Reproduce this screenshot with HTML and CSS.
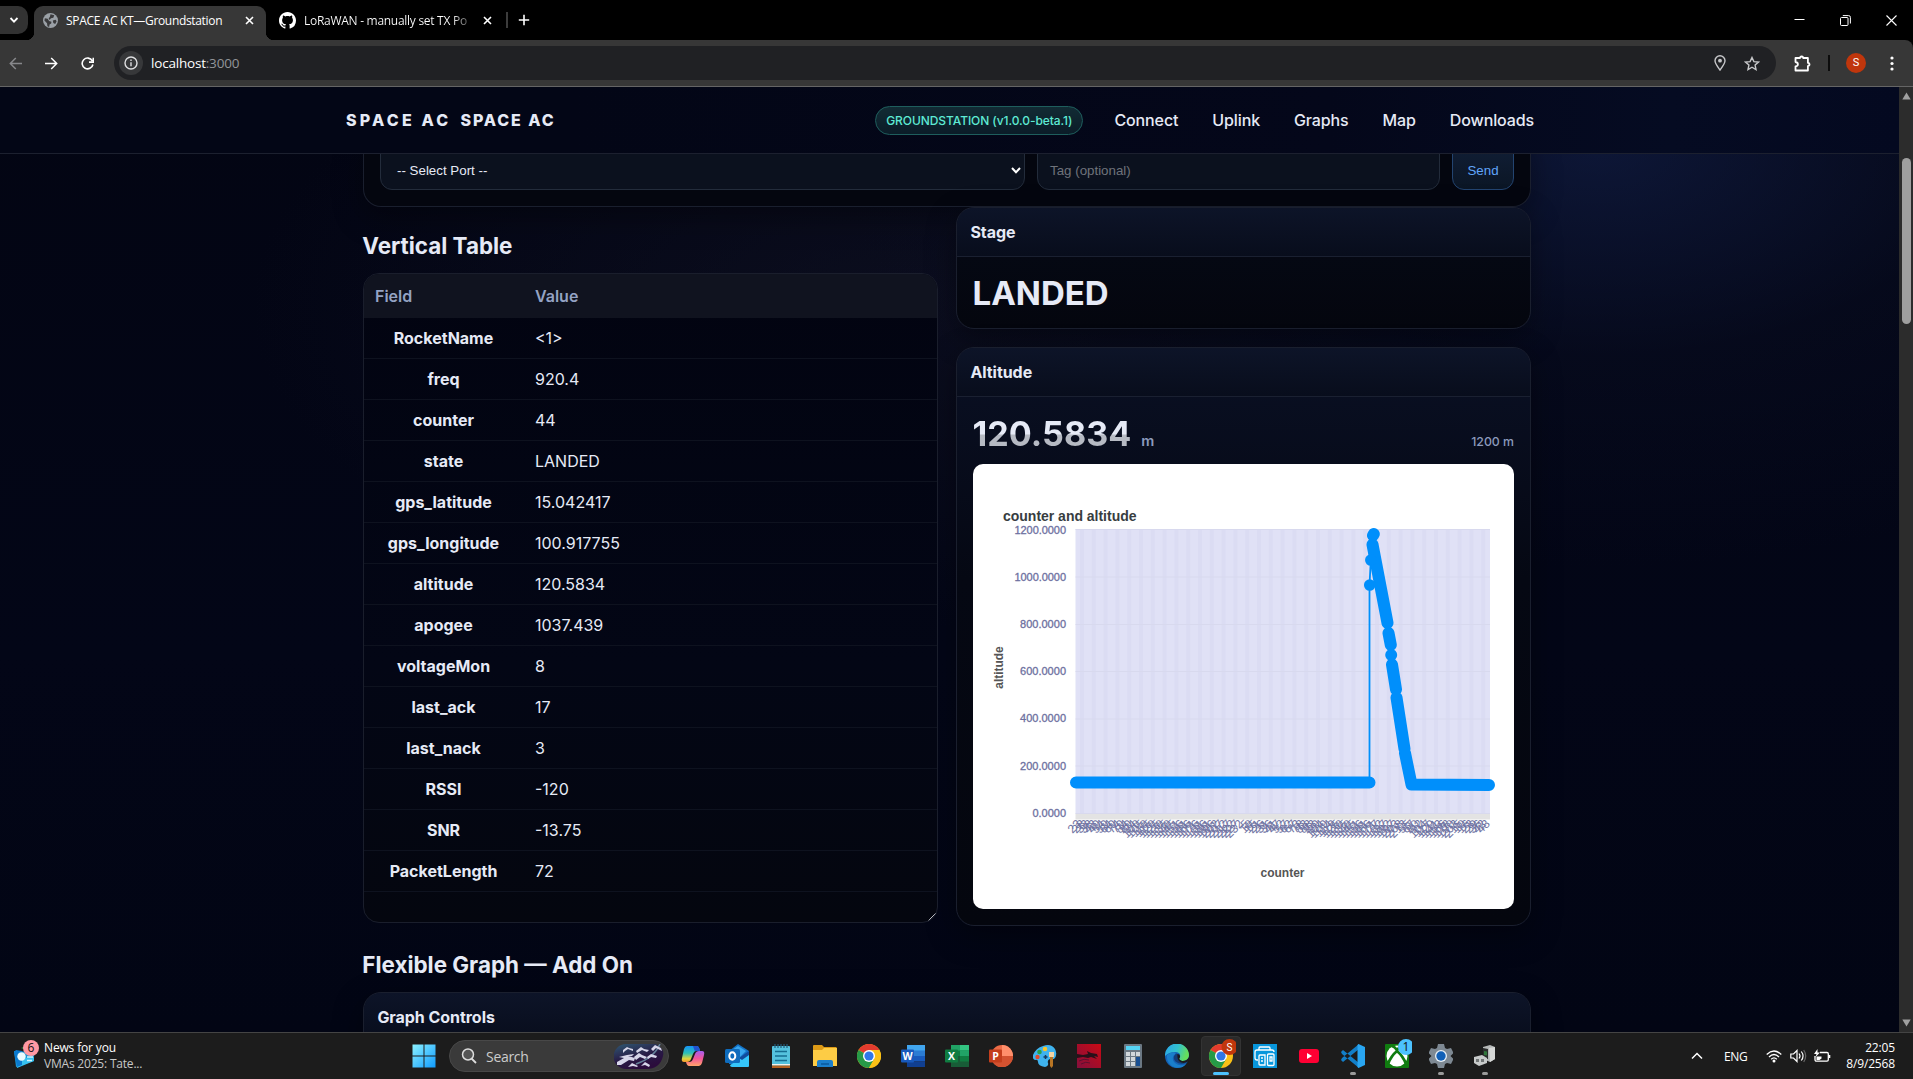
FILE: index.html
```html
<!DOCTYPE html>
<html lang="en">
<head>
<meta charset="utf-8">
<title>SPACE AC KT—Groundstation</title>
<link rel="stylesheet" href="styles.css">
</head>
<body>
<div class="screen">
  <div class="tabstrip">
    <div class="tab-search"><svg width="10" height="10" viewBox="0 0 10 10"><path d="M1.5 3l3.5 3.6L8.5 3" fill="none" stroke="#fff" stroke-width="1.8"/></svg></div>
    <div class="tab tab-active">
      <svg class="favicon" width="15" height="15" viewBox="0 0 16 16"><circle cx="8" cy="8" r="8" fill="#9aa0a6"/><path d="M2 5.5l3 .5 1.500 2.500 2.500.8-.3 2-1.700 1-.5 2.500-1.800-.8-.4-3L1.500 8zM8 1.200l4 1.300-1 2.500-2.500.5-1.500 2-1-1.800 1.300-1.500zM10.500 8l3-.8 1 1.500-1.500 3-2-1z" fill="#3a3a3c"/></svg>
      <span class="tab-title t1">SPACE AC KT—Groundstation</span>
      <svg class="tab-close" width="9" height="9" viewBox="0 0 9 9"><path d="M1 1l7 7M8 1l-7 7" stroke="#fff" stroke-width="1.600"/></svg>
    </div>
    <div class="tab tab-idle">
      <svg class="favicon" width="17" height="17" viewBox="0 0 16 16"><path fill="#fff" d="M8 0C3.580 0 0 3.580 0 8c0 3.540 2.290 6.530 5.470 7.590.4.070.55-.17.55-.38 0-.19-.01-.82-.01-1.490-2.010.37-2.530-.49-2.690-.94-.09-.23-.48-.94-.82-1.130-.28-.15-.68-.52-.01-.53.63-.01 1.080.58 1.230.82.72 1.210 1.870.87 2.330.66.07-.52.28-.87.51-1.070-1.780-.2-3.640-.89-3.640-3.950 0-.87.31-1.590.82-2.150-.08-.2-.36-1.020.08-2.120 0 0 .67-.21 2.200.82.640-.18 1.320-.27 2-.27s1.360.09 2 .27c1.530-1.040 2.200-.82 2.200-.82.440 1.100.16 1.920.08 2.120.51.56.82 1.270.82 2.150 0 3.070-1.870 3.750-3.650 3.950.29.25.54.73.54 1.480 0 1.070-.01 1.930-.01 2.200 0 .21.15.46.55.38A8.010 8.010 0 0016 8c0-4.420-3.580-8-8-8z"/></svg>
      <span class="tab-title t2">LoRaWAN - manually set TX Po</span>
      <svg class="tab-close" width="9" height="9" viewBox="0 0 9 9"><path d="M1 1l7 7M8 1l-7 7" stroke="#fff" stroke-width="1.600"/></svg>
    </div>
    <span class="tab-divider"></span>
    <svg class="new-tab" width="12" height="12" viewBox="0 0 12 12"><path d="M6 .8v10.400M.8 6h10.400" stroke="#fff" stroke-width="1.600"/></svg>
    <div class="window-buttons">
      <svg width="11" height="11" viewBox="0 0 11 11"><path d="M.5 4.500h10" stroke="#fff"/></svg>
      <svg width="11" height="11" viewBox="0 0 11 11"><rect x=".5" y="2.500" width="7.500" height="8" rx="1" fill="none" stroke="#fff"/><path d="M2.800.6H8.500a1.800 1.800 0 011.900 1.800V8.500" fill="none" stroke="#fff"/></svg>
      <svg width="11" height="11" viewBox="0 0 11 11"><path d="M.5.5l10 10M10.500.5l-10 10" stroke="#fff" stroke-width="1.100"/></svg>
    </div>
  </div>

  <div class="toolbar">
    <div class="nav-buttons">
      <svg width="13" height="13" viewBox="0 0 13 13"><path d="M13 6.500H1.300M6.800 1L1.300 6.500l5.500 5.500" fill="none" stroke="#87888b" stroke-width="1.500"/></svg>
      <svg width="13" height="13" viewBox="0 0 13 13"><path d="M0 6.500h11.700M6.200 1l5.500 5.500-5.500 5.500" fill="none" stroke="#fff" stroke-width="1.500"/></svg>
      <svg width="13" height="13" viewBox="0 0 13 13"><path d="M11.300 3.800A5.400 5.400 0 1011.900 7.500M12.300.8v4.300H8" fill="none" stroke="#fff" stroke-width="1.600"/></svg>
    </div>
    <div class="omnibox">
      <span class="site-info"><svg width="14" height="14" viewBox="0 0 14 14"><circle cx="7" cy="7" r="6" fill="none" stroke="#dedfe1" stroke-width="1.400"/><path d="M7 6.200v4M7 3.500v1.500" stroke="#dedfe1" stroke-width="1.400"/></svg></span>
      <span class="url">localhost<span class="port">:3000</span></span>
      <svg class="pin" width="12" height="16" viewBox="0 0 12 16"><path d="M6 15C3 11 1 8.500 1 5.800a5 5 0 0110 0C11 8.500 9 11 6 15z" fill="none" stroke="#c7c8ca" stroke-width="1.400"/><circle cx="6" cy="5.700" r="1.900" fill="#c7c8ca"/></svg>
      <svg class="star" width="16" height="15" viewBox="0 0 16 15"><path d="M8 1.500l1.900 4.100 4.600.5-3.400 3 .9 4.400L8 11.200l-4 2.300.9-4.400-3.400-3 4.600-.5z" fill="none" stroke="#c7c8ca" stroke-width="1.400"/></svg>
    </div>
    <svg class="puzzle" width="17" height="17" viewBox="0 0 17 17"><path d="M1.500 3H6V2.300q1.700-1.600 3.200 0V3h4.700v4.800l1 .4q1.200 1.200 0 2.400l-1 .4v4.500H1.500v-4q2.400-.3 2.400-2.200T1.500 7z" fill="none" stroke="#fff" stroke-width="1.800" stroke-linejoin="round"/></svg>
    <span class="bar-divider"></span>
    <span class="avatar">S</span>
    <svg class="menu" width="4" height="15" viewBox="0 0 4 15"><g fill="#fff"><circle cx="2" cy="2" r="1.600"/><circle cx="2" cy="7.500" r="1.600"/><circle cx="2" cy="13" r="1.600"/></g></svg>
  </div>

  <div class="viewport">
    <div class="page">
      <header class="site-header">
        <div class="brand"><span class="brand-wide">SPACE AC</span><span class="brand-name">SPACE AC</span></div>
        <nav class="site-nav">
          <span class="pill">GROUNDSTATION (v1.0.0-beta.1)</span>
          <a>Connect</a><a>Uplink</a><a>Graphs</a><a>Map</a><a>Downloads</a>
        </nav>
      </header>
      <main class="content">
        <section class="card port-card">
          <div class="field select"><span>-- Select Port --</span><svg width="10" height="7" viewBox="0 0 10 7"><path d="M1 1l4 4.200L9 1" fill="none" stroke="#fff" stroke-width="2"/></svg></div>
          <div class="field tag">Tag (optional)</div>
          <div class="send">Send</div>
        </section>
        <div class="columns">
          <section class="left">
            <h2>Vertical Table</h2>
            <div class="table-wrap">
              <table>
                <thead><tr><th>Field</th><th>Value</th></tr></thead>
                <tbody>
                  <tr><th>RocketName</th><td>&lt;1&gt;</td></tr>
                  <tr><th>freq</th><td>920.4</td></tr>
                  <tr><th>counter</th><td>44</td></tr>
                  <tr><th>state</th><td>LANDED</td></tr>
                  <tr><th>gps_latitude</th><td>15.042417</td></tr>
                  <tr><th>gps_longitude</th><td>100.917755</td></tr>
                  <tr><th>altitude</th><td>120.5834</td></tr>
                  <tr><th>apogee</th><td>1037.439</td></tr>
                  <tr><th>voltageMon</th><td>8</td></tr>
                  <tr><th>last_ack</th><td>17</td></tr>
                  <tr><th>last_nack</th><td>3</td></tr>
                  <tr><th>RSSI</th><td>-120</td></tr>
                  <tr><th>SNR</th><td>-13.75</td></tr>
                  <tr><th>PacketLength</th><td>72</td></tr>
                </tbody>
              </table>
              <svg class="grip" width="8" height="8" viewBox="0 0 8 8"><path d="M0 8L8 0M5 8l3-3" stroke="#b9bbc2" stroke-width="1"/></svg>
            </div>
          </section>
          <section class="right">
            <div class="card stage">
              <h3>Stage</h3>
              <div class="big">LANDED</div>
            </div>
            <div class="card altitude">
              <h3>Altitude</h3>
              <div class="reading"><span class="big shaded">120.5834</span><span class="unit">m</span><span class="max">1200 m</span></div>
              <div class="chart-box">
                <svg width="541" height="445" viewBox="973 464 541 445" class="chart">
                  <text class="c-title" x="1003" y="521" textLength="133.500">counter and altitude</text>
                  <rect x="1075.500" y="529" width="414.500" height="284.500" fill="#e0e1f6"/>
                  <rect x="1075.500" y="813.500" width="414.500" height="6" fill="#e3e3e3"/>
                  <g id="bands"></g>
                  <path d="M1075.500 529.500h414.500M1075.500 577h414.500M1075.500 624.500h414.500M1075.500 671.500h414.500M1075.500 719h414.500M1075.500 766h414.500M1075.500 813.500h414.500" stroke="#d8d9ee"/>
                  <g class="y-labels">
                    <text x="1066" y="534" textLength="51.500">1200.0000</text>
                    <text x="1066" y="581" textLength="51.500">1000.0000</text>
                    <text x="1066" y="628" textLength="46">800.0000</text>
                    <text x="1066" y="675" textLength="46">600.0000</text>
                    <text x="1066" y="722" textLength="46">400.0000</text>
                    <text x="1066" y="770" textLength="46">200.0000</text>
                    <text x="1066" y="817" textLength="33.500">0.0000</text>
                  </g>
                  <text class="c-axis" transform="translate(1003 667.500) rotate(-90)" textLength="42.500">altitude</text>
                  <text class="c-axis" x="1282.500" y="877" textLength="44">counter</text>
                  <g id="xlabels" class="x-labels"></g>
                  <g fill="none" stroke="#008ffb" stroke-linecap="round">
                    <path d="M1369.500 782V585l1.300-25 1.200-16 1.500-11" stroke-width="1.800"/>
                    <path stroke-width="12" stroke-linejoin="round" d="M1076 782.400L1369.500 782.600M1373 535.500l.8-1.500M1372.500 544.500L1387.500 623M1388.500 633l2.300 12M1391.200 655v.1M1392 664.500l4 25M1396.500 697.500L1404.500 749M1405 753L1411.500 784.500L1489 785"/>
                    <path stroke-width="11.500" d="M1369.700 585v.1M1370.800 560v.1"/>
                  </g>
                </svg>
              </div>
            </div>
          </section>
        </div>
        <h2 class="flex-title">Flexible Graph — Add On</h2>
        <section class="card controls"><h3>Graph Controls</h3></section>
      </main>
    </div>
    <div class="scrollbar">
      <svg width="9" height="8" viewBox="0 0 9 8"><path d="M4.500.5L8.700 7.500H.3z" fill="#a0a0a0"/></svg>
      <span class="thumb"></span>
      <svg class="down" width="9" height="8" viewBox="0 0 9 8"><path d="M4.500 7.500L8.700.5H.3z" fill="#a0a0a0"/></svg>
    </div>
  </div>

  <div class="taskbar">
    <div class="news">
      <svg width="28" height="30" viewBox="0 0 28 30"><path d="M8 8l9-3v6z" fill="#35a853"/><path d="M1 11l20 1v9L3 27z" fill="#1697d5"/><path d="M3 19l18-2v4L4 28z" fill="#37c1f0"/><path d="M1 12l2-2 6 1v14l-5 2z" fill="#0b7ad0"/><circle cx="8.500" cy="16.500" r="4.200" fill="#e9fbff"/><path d="M14 17h6M14 20.500h5" stroke="#d5f5ff" stroke-width="1.500"/><circle cx="18" cy="8" r="8" fill="#ff99a4"/><text x="18" y="12" text-anchor="middle" class="badge-text">6</text></svg>
      <div class="news-text"><span class="news-a">News for you</span><span class="news-b">VMAs 2025: Tate...</span></div>
    </div>
    <div class="apps">
      <span class="app"><svg width="24" height="24" viewBox="0 0 24 24"><defs><linearGradient id="win" x1="0" y1="0" x2="1" y2="1"><stop offset="0" stop-color="#8bf1ff"/><stop offset="1" stop-color="#0f9bff"/></linearGradient></defs><path d="M.5.500h11v11H.5zM12.500.5h11v11h-11zM.5 12.500h11v11H.5zM12.500 12.500h11v11h-11z" fill="url(#win)"/></svg></span>
      <div class="search">
        <svg width="16" height="16" viewBox="0 0 16 16"><circle cx="7" cy="6.500" r="5.500" fill="#555" stroke="#ddd" stroke-width="1.500"/><path d="M10.500 10.500l4.500 4.500" stroke="#ddd" stroke-width="1.800"/></svg>
        <span class="search-label">Search</span>
        <svg class="gleam" width="50" height="25" viewBox="0 0 50 25"><defs><linearGradient id="gl" x1="0" y1="0" x2=".5" y2="1"><stop offset="0" stop-color="#2f5872"/><stop offset=".6" stop-color="#271a45"/><stop offset="1" stop-color="#2b0c3c"/></linearGradient></defs><path d="M12 0H42Q51 5 49 12Q46 25 32 25H12A12.500 12.500 0 0112 0z" fill="url(#gl)"/><path d="M46 0Q40 14 22 20" stroke="#65819a" stroke-width="1.500" fill="none"/><g fill="#d6d5e9"><path d="M9 6l4-3 2 1 4 1 0 2-5-2-3 2-2 2zM22 7l5-4 3 2 5 1-2 2-5-2-5 3zM37 5l4-4 6 3 1 3-6-3-3 3z"/><path d="M3 18l7-4 4-2 7 2-1 3-5-1-8 5-4 0zM5 13l8-2 7-1-2 2-8 2zM20 13l5-4 3 2 5 2-2 2-5-2-4 3zM33 13l4-3 6 2-1 2-5-1-3 2zM14 23l4-4 6 3-1 1-4-1zM27 22l4-4 5 3-1 2-4-2z"/></g></svg>
      </div>
      <span class="app"><svg width="24" height="24" viewBox="0 0 24 24"><defs><linearGradient id="cp1" x1="0" y1="0" x2="0" y2="1"><stop offset="0" stop-color="#1692f5"/><stop offset=".45" stop-color="#2cc0b5"/><stop offset=".8" stop-color="#e2d53a"/><stop offset="1" stop-color="#f5922f"/></linearGradient><linearGradient id="cp2" x1="0" y1="0" x2="0" y2="1"><stop offset="0" stop-color="#a45df0"/><stop offset=".5" stop-color="#f2559a"/><stop offset="1" stop-color="#ffa469"/></linearGradient></defs><path d="M6 2h10q2 0 3 5h-4q-2 0-3 3l-2 5q-1 3-4 3H3q-3 0-2-4L3 5q1-3 3-3z" fill="url(#cp1)"/><path d="M12 2h4q2 0 3 5h-4q-2 0-2-2z" fill="#2152cf"/><path d="M18 22H8q-2 0-3-4h4q2 0 3-3l2-5q1-3 4-3h3q3 0 2 4l-2 8q-1 3-3 3z" fill="url(#cp2)"/></svg></span>
      <span class="app"><svg width="24" height="24" viewBox="0 0 24 24"><path d="M4 7l9-7 11 7v13H4z" fill="#1373c8"/><path d="M7 6l6-4 8 5-8 8H7z" fill="#38a6ee"/><path d="M24 8v14q0 1-1 1H7q-2 0-2-2l12-7z" fill="#35c6fa"/><path d="M14 14L24 7v4l-7 5z" fill="#114b9c"/><rect x="0" y="5" width="15" height="14" rx="1.500" fill="#0f6cbd"/><ellipse cx="7.300" cy="12" rx="3" ry="3.700" fill="none" stroke="#fff" stroke-width="2"/></svg></span>
      <span class="app"><svg width="18" height="24" viewBox="0 0 18 24"><rect y="2" width="18" height="22" rx="1" fill="#55c2de"/><path d="M0 20h18v1.500H0z" fill="#f5f1e9"/><path d="M0 21.500h18V24H0z" fill="#b36121"/><path d="M3 0v4M6 0v4M9 0v4M12 0v4M15 0v4" stroke="#225c7a" stroke-width="1.200"/><path d="M3 7.500h12M3 12h12M3 16.500h12" stroke="#166d91" stroke-width="1.600"/></svg></span>
      <span class="app"><svg width="24" height="22" viewBox="0 0 24 22"><path d="M0 1q0-1 1-1h8l2 2h12l1 1v3H0z" fill="#dd9a16"/><path d="M0 5h9l2-2h13v18H0z" fill="#fdcc45"/><path d="M4 22v-5q0-2 2-2h12q2 0 2 2v5z" fill="#1b7fcc"/><path d="M8 19h8" stroke="#0a589e" stroke-width="1.500"/></svg></span>
      <span class="app"><svg width="24" height="24" viewBox="0 0 24 24"><circle cx="12" cy="12" r="12" fill="#fbc116"/><path d="M12 12L1.600 6A12 12 0 0122.400 6z" fill="#e33b2e"/><path d="M1.600 6A12 12 0 0012 24l5.200-9L12 12z" fill="#269a47"/><path d="M12 6h10.400A12 12 0 0112 24l5.200-9z" fill="#fbc116"/><circle cx="12" cy="12" r="6" fill="#fff"/><circle cx="12" cy="12" r="4.600" fill="#2f77e8"/></svg></span>
      <span class="app"><svg width="24" height="22" viewBox="0 0 24 22"><path d="M6 0h18v6H6z" fill="#41a5ee"/><path d="M6 5.500h18V11H6z" fill="#2b7cd3"/><path d="M6 11h18v5.500H6z" fill="#185abd"/><path d="M6 16.500h18V22H6z" fill="#103f91"/><rect y="4.500" width="13" height="13" rx="1" fill="#185abd"/><text class="app-letter" x="6.500" y="15">W</text></svg></span>
      <span class="app"><svg width="24" height="22" viewBox="0 0 24 22"><path d="M6 0h9v6H6z" fill="#21a366"/><path d="M15 0h9v6h-9z" fill="#33c481"/><path d="M6 5.500h18V11H6z" fill="#107c41"/><path d="M15 5.500h9V11h-9z" fill="#21a366"/><path d="M6 11h18v11H6z" fill="#185c37"/><path d="M15 11h9v5.500h-9z" fill="#107c41"/><rect y="4.500" width="13" height="13" rx="1" fill="#107c41"/><text class="app-letter" x="6.500" y="15">X</text></svg></span>
      <span class="app"><svg width="24" height="22" viewBox="0 0 24 22"><circle cx="13" cy="11" r="11" fill="#ed6c47"/><path d="M13 0a11 11 0 0111 11H13z" fill="#ff8f6b"/><path d="M24 11a11 11 0 01-21 5l10-5z" fill="#d35230"/><rect y="4.500" width="13" height="13" rx="1" fill="#c43e1c"/><text class="app-letter" x="6.500" y="15">P</text></svg></span>
      <span class="app"><svg width="24" height="24" viewBox="0 0 24 24"><path d="M10 2Q18-1 22 5q3 6-1 10h-4q-3 1-2 4 1 3-3 4-7-1-7-5 0-3-3-2-3-1-2-5Q3 4 10 2z" fill="#3fb3ee"/><circle cx="12" cy="5" r="2.300" fill="#f8c62b"/><circle cx="6.500" cy="8" r="2.300" fill="#2aa04a"/><circle cx="4.500" cy="13" r="2.200" fill="#e24b2c"/><path d="M12.500 11v4M10.500 13h4" stroke="#153a5f" stroke-width="1.500"/><path d="M16 8h5v5h-1.500v1h-2v-1H16z" fill="#f1d4a5"/><path d="M17 13h3v9l-1.500 2-1.500-2z" fill="#b87524"/></svg></span>
      <span class="app"><svg width="24" height="24" viewBox="0 0 24 24"><defs><linearGradient id="kt" x1="1" y1="0" x2="0" y2="1"><stop offset="0" stop-color="#c90a14"/><stop offset="1" stop-color="#840f3c"/></linearGradient></defs><path d="M0 0h24v24H0z" fill="url(#kt)"/><path d="M0 10l6 1 5-1-1-3 4 2 6 1 1 3-4-1 3 3-6-2-3 1-5-1-6 1z" fill="#281019"/><path d="M2 17q5-3 10-1M4 20q5-3 9-1" stroke="#5b1030" fill="none"/></svg></span>
      <span class="app"><svg width="18" height="24" viewBox="0 0 18 24"><rect width="18" height="24" rx="1" fill="#6b7883"/><path d="M2 2h14v4H2z" fill="#56d4f5"/><path d="M2 8h4v4H2zM7 8h4v4H7zM12 8h4v4h-4zM2 13h4v4H2zM7 13h4v4H7zM2 18h4v4H2zM7 18h4v4H7z" fill="#d1d7db"/><path d="M12 13h4v9h-4z" fill="#184f92"/></svg></span>
      <span class="app"><svg width="24" height="24" viewBox="0 0 24 24"><defs><linearGradient id="edg" x1="0" y1="0" x2="1" y2=".3"><stop offset="0" stop-color="#2aa4ea"/><stop offset=".55" stop-color="#32c1cf"/><stop offset="1" stop-color="#66df5a"/></linearGradient></defs><circle cx="12" cy="12" r="12" fill="#1462b5"/><path d="M0 12A12 12 0 0124 11q0 6-7 6-5-1-2-4 1-5-5-5Q4 8 0 12z" fill="url(#edg)"/><path d="M11 9q-6 5-1 10 5 4 11 1-4 5-11 3.500Q1 20 2 11q5-4 9-2z" fill="#1a7fcb"/><path d="M11 9.500q-4 4-.5 8 5 4 11.500 1l2-5q-3 4-7 3.500-5-1-2-4 0-3-4-3.500z" fill="#143d78"/><path d="M12.500 10q3 .5 2.500 3-2 3 2 4 5 .5 7-4l.500 4-6 2q-7-1-6-9z" fill="#1c1c1c"/></svg></span>
      <span class="app app-open"><svg width="30" height="30" viewBox="0 0 30 30"><g transform="translate(3 5)"><circle cx="12" cy="12" r="12" fill="#fbc116"/><path d="M12 12L1.600 6A12 12 0 0122.400 6z" fill="#e33b2e"/><path d="M1.600 6A12 12 0 0012 24l5.200-9L12 12z" fill="#269a47"/><circle cx="12" cy="12" r="6" fill="#fff"/><circle cx="12" cy="12" r="4.600" fill="#2f77e8"/></g><circle cx="23.500" cy="8" r="8" fill="#c0360c"/><text class="s-badge" x="23.500" y="12">S</text></svg></span>
      <span class="app"><svg width="24" height="24" viewBox="0 0 24 24"><path d="M0 0h24v24H0z" fill="#0796dc"/><g fill="none" stroke="#fff" stroke-width="1.300"><path d="M6 6V4q0-1 1-1h9q1 0 1 1v2M5 16H4q-2 0-2-2V8q0-2 2-2h15q2 0 2 2M6 20V12q0-1 1-1h5v10H7q-1 0-1-1M8 14h2M8 17h2"/><rect x="14.500" y="10" width="6.500" height="11.500" rx="1"/><path d="M17 13h2v4h-2z"/></g></svg></span>
      <span class="app"><svg width="20" height="14" viewBox="0 0 20 14"><rect width="20" height="14" rx="3" fill="#ff0033"/><path d="M8 4l5 3-5 3z" fill="#fff"/></svg></span>
      <span class="app running"><svg width="24" height="24" viewBox="0 0 24 24"><path d="M0 8l2-2 16 13v5L1 10zM0 16l2 2L18 5V0L1 14z" fill="#127fc9"/><path d="M17.500 0L24 3v18l-6.500 3-1-1V1z" fill="#29a6f2"/></svg></span>
      <span class="app xbox"><svg width="30" height="30" viewBox="0 0 30 30"><rect x="3" y="5" width="24" height="24" rx="1" fill="#107c10"/><circle cx="15" cy="17" r="10.500" fill="#fff"/><path d="M6 25Q9 17 15 12q6 5 9 13M10 7q3 1 5 4 2-3 5-4" fill="none" stroke="#107c10" stroke-width="2.800"/><circle cx="24" cy="8" r="8" fill="#4cc2ff"/><text x="24" y="12" text-anchor="middle" class="badge-text">1</text></svg></span>
      <span class="app running"><svg width="24" height="24" viewBox="0 0 24 24"><path d="M9 0h6l1 4 2 1 4-1 2.500 5-3 3 3 3L22 20l-4-1-2 1-1 4H9l-1-4-2-1-4 1-2.500-5 3-3-3-3L2 4l4 1 2-1z" fill="#7e8993"/><circle cx="12" cy="12" r="6" fill="#e8f0f7"/><circle cx="12" cy="12" r="4.700" fill="#1160b7"/></svg></span>
      <span class="app running"><svg width="24" height="22" viewBox="0 0 24 22"><path d="M10 2l7-2 5 2v12l-5 3-7-3z" fill="#b5b8b8"/><path d="M10 3l5 1v10l-5-1z" fill="#2a2d2c"/><path d="M11 6l3 .5v4l-3-.5z" fill="#35c24a" opacity=".5"/><path d="M16 3l6-1v12l-5 3z" fill="#d6d8d7"/><path d="M1 12l8-2 5 3v5l-8 3-5-3z" fill="#c8cbcb"/><path d="M3 14h3v3H3zM8 14h3v3H8z" fill="#717676"/></svg></span>
    </div>
    <div class="tray">
      <svg class="chev" width="12" height="8" viewBox="0 0 12 8"><path d="M1 6.500l5-5 5 5" fill="none" stroke="#fff" stroke-width="1.500"/></svg>
      <span class="eng">ENG</span>
      <svg class="wifi" width="16" height="13" viewBox="0 0 16 13"><g fill="none" stroke="#fff" stroke-width="1.300"><path d="M.7 4.500Q8-2.500 15.300 4.500M3 7Q8 2 13 7M5.200 9.300Q8 6.500 10.800 9.300"/></g><circle cx="8" cy="11" r="1.500" fill="#fff"/></svg>
      <svg class="sound" width="17" height="14" viewBox="0 0 17 14"><path d="M.8 5h2.700L7 1.500v11L3.500 9H.8z" fill="none" stroke="#fff" stroke-width="1.200"/><path d="M9 4.500q2 2.500 0 5M11.300 2.500q3.500 4.500 0 9" fill="none" stroke="#fff" stroke-width="1.200"/><path d="M13.700 1q4 6 0 12" fill="none" stroke="#666" stroke-width="1.200"/></svg>
      <svg class="battery" width="17" height="14" viewBox="0 0 17 14"><path d="M6 3.500h7q1.300 0 1.300 1.300v6q0 1.400-1.300 1.400H2.500Q1 12.200 1 10.800V7" fill="none" stroke="#fff" stroke-width="1.300"/><path d="M14.500 6h1.800v3h-1.800zM2.500 7.500h5v2l-2 1.500h-3z" fill="#fff"/><path d="M3.500 0L0 5h2.500l-1 3L6 3.500H3.500z" fill="#fff"/></svg>
      <div class="clock"><span>22:05</span><span>8/9/2568</span></div>
    </div>
  </div>
</div>
<script src="chart.js"></script>
</body>
</html>
```
FILE: styles.css
```css
* { box-sizing: border-box; }
body { margin: 0; background: #000; overflow: hidden; }
svg { display: block; flex: none; }
.screen { width: 1913px; height: 1079px; display: flex; flex-direction: column; font-family: "Open Sans", "Noto Sans", sans-serif; color: #fff; overflow: hidden; }

/* browser chrome */
.tabstrip { height: 40px; flex: none; display: flex; align-items: flex-start; background: #000; }
.tab-search { width: 28px; height: 28px; margin-top: 6px; background: #323232; border-radius: 0 10px 10px 0; display: flex; align-items: center; justify-content: center; }
.tab { height: 34px; margin-top: 6px; display: flex; align-items: center; padding-bottom: 5px; font-size: 12px; white-space: nowrap; }
.tab-active { position: relative; width: 232px; margin-left: 6px; background: #373737; border-radius: 9px 9px 0 0; padding-left: 9px; }
.tab-active::before, .tab-active::after { content: ""; position: absolute; bottom: 0; width: 8px; height: 8px; }
.tab-active::before { left: -8px; background: radial-gradient(circle at 0 0, transparent 8px, #373737 8.500px); }
.tab-active::after { right: -8px; background: radial-gradient(circle at 100% 0, transparent 8px, #373737 8.500px); }
.tab-idle { width: 228px; padding-left: 13px; }
.favicon { margin-right: 8px; }
.tab-title { line-height: 17px; }
.t1 { width: 172px; letter-spacing: -0.330px; }
.t2 { width: 168px; letter-spacing: -0.280px; background: linear-gradient(90deg, #fff 148px, #222 169px); -webkit-background-clip: text; background-clip: text; color: transparent; }
.tab-active .tab-close { margin-left: 7px; }
.t2 + .tab-close { margin-left: 11px; }
.tab-divider { width: 2px; height: 16px; margin: 12px 0 0 12px; background: #3c3c3c; }
.new-tab { margin: 14px 0 0 10px; }
.window-buttons { margin: 15px 16px 0 auto; display: flex; gap: 35px; }

.toolbar { height: 47px; flex: none; display: flex; align-items: center; background: #373737; border-bottom: 1px solid #656565; border-top-right-radius: 8px; }
.nav-buttons { display: flex; gap: 23px; padding-left: 9px; width: 114px; }
.omnibox { width: 1662px; height: 34px; border-radius: 17px; background: #202124; display: flex; align-items: center; padding-left: 5px; }
.site-info { width: 24px; height: 24px; border-radius: 50%; background: #37383a; display: flex; align-items: center; justify-content: center; }
.url { margin-left: 8px; font-size: 13.500px; letter-spacing: -0.200px; flex: 1; }
.port { color: #92959a; }
.pin { margin-right: 18px; }
.star { margin-right: 16px; }
.puzzle { margin-left: 18px; }
.bar-divider { width: 2px; height: 16px; background: #0c0c0c; margin-left: 17px; }
.avatar { width: 20px; height: 20px; border-radius: 50%; background: #c0360c; margin-left: 16px; font: 11px/20px Roboto, sans-serif; text-align: center; }
.menu { margin-left: 24px; }

.viewport { height: 945px; flex: none; display: flex; }
.page { width: 1899px; height: 945px; overflow: hidden; color: #e6eaf6; font-family: Inter, sans-serif; font-size: 16px;
  background: radial-gradient(ellipse 760px 420px at 1600px 60px, rgba(20,34,78,.6), rgba(12,18,42,.32) 50%, transparent), radial-gradient(ellipse 650px 320px at 900px 220px, rgba(18,20,38,.55), transparent), linear-gradient(#030513, #030617 60%, #020514); }
.site-header { position: relative; z-index: 2; height: 67px; border-bottom: 1px solid #1c202f; padding: 0 365px 0 346px; display: flex; align-items: center; justify-content: space-between; background: linear-gradient(90deg, #030616 30%, #04071a 70%, #050b22 88%, #040920); }
.brand { display: flex; gap: 9px; font-weight: 800; font-size: 16px; }
.brand-wide { letter-spacing: 3.200px; }
.brand-name { letter-spacing: 1.900px; }
.site-nav { display: flex; align-items: center; gap: 34px; font-weight: 500; letter-spacing: -0.120px; }
.pill { height: 29px; margin-right: -3px; padding: 0 10px; border: 1px solid #1e5e5d; border-radius: 15px; background: linear-gradient(#122b34, #0b1c28); color: #5eead4; font-size: 12px; line-height: 27px; letter-spacing: -0.070px; }

.content { width: 1168px; margin-left: 363px; margin-top: -20px; }
.card { border: 1px solid #1a1f2e; border-radius: 18px; background: linear-gradient(#0a1024, #050813 40%, #04060e); box-shadow: 0 10px 30px rgba(0,0,0,.35); }
.port-card { height: 73px; display: flex; gap: 12px; padding: 0 16px 17px; background: #04060f; border-top: 0; font-family: "Liberation Sans", Arial, sans-serif; }
.field { height: 56px; border: 1px solid #232c3b; border-radius: 12px; background: #0b111e; font-size: 13.330px; display: flex; align-items: center; padding: 17px 12px 0; }
.select { width: 645px; padding: 17px 3px 0 16px; justify-content: space-between; }
.tag { width: 403px; color: #6f737b; }
.send { width: 62px; height: 56px; border: 1px solid #234470; border-radius: 12px; background: linear-gradient(#12203a, #0b1625); color: #60a5fa; font-size: 13.330px; text-align: center; padding-top: 28px; }
.columns { display: grid; grid-template-columns: 575px 575px; gap: 18px; }
h2 { margin: 0; font-size: 22.400px; line-height: 28px; font-weight: 700; text-indent: -0.700px; }
.left h2 { margin: 25px 0 13px; }
.table-wrap { position: relative; height: 650px; border: 1px solid #1a1e2c; border-radius: 16px; overflow: hidden; background: linear-gradient(#020411, #030615 60%, #04060f); }
table { width: 100%; border-collapse: separate; border-spacing: 0; table-layout: fixed; }
th, td { padding: 0 11px; height: 41px; border-bottom: 1px solid #0e121f; }
thead th { height: 44px; background: #10131f; color: #94a3c4; font-weight: 600; text-align: left; border-bottom: 0; }
th:first-child { width: 160px; }
tbody th { font-weight: 700; letter-spacing: 0; }
tbody th { padding: 0 12px 0 11px; }
.grip { position: absolute; right: 1px; bottom: 1px; }
.right { display: flex; flex-direction: column; gap: 18px; }
h3 { margin: 0; height: 49px; padding: 0 13.400px; line-height: 49px; font-size: 16px; font-weight: 700; letter-spacing: -0.050px; border-bottom: 1px solid #1a2031; background: linear-gradient(#0d1428, #080d1c); border-radius: 17px 17px 0 0; }
.stage { height: 122px; }
.big { font-size: 33px; font-weight: 700; line-height: 40px; }
.stage .big { padding: 16px 15.500px 0; }
.altitude { height: 579px; padding-bottom: 16px; }
.reading { display: flex; align-items: baseline; padding: 17px 16px 0 15.500px; height: 67px; color: #8c9abc; }
.shaded { font-size: 34.200px; background: linear-gradient(#e6eaf6 20px, #b6bac3 21px); -webkit-background-clip: text; background-clip: text; color: transparent; }
.unit { font-size: 14.500px; font-weight: 600; margin-left: 10px; }
.max { font-size: 12.300px; font-weight: 500; margin-left: auto; }
.chart-box { margin: 0 16px; height: 445px; background: #fff; border-radius: 10px; overflow: hidden; }
.chart text { font-family: "Liberation Sans", Arial, sans-serif; }
.c-title { font-size: 14px; font-weight: 700; fill: #373d3f; }
.c-axis { font-size: 12px; font-weight: 700; fill: #555; text-anchor: middle; }
.y-labels { font-size: 11px; fill: #6d70a0; stroke: #6d70a0; stroke-width: .3px; text-anchor: end; }
.x-labels { font-size: 12px; fill: #7074a3; text-anchor: end; }
.flex-title { margin-top: 25px; }
.controls { margin-top: 13px; height: 80px; }

.scrollbar { width: 14px; background: #2c2c2c; display: flex; flex-direction: column; align-items: center; padding: 5px 0 5px 1px; }
.thumb { width: 9px; height: 166px; border-radius: 5px; background: #9f9f9f; margin-top: 58px; }
.down { margin-top: auto; }

/* taskbar */
.taskbar { height: 47px; flex: none; background: #1c1c1c; border-top: 1px solid #444; display: flex; align-items: center; }
.news { width: 402px; display: flex; align-items: center; padding-left: 13px; }
.news > svg { margin-top: -3px; }
.news-text { display: flex; flex-direction: column; margin-left: 3px; font-size: 12px; line-height: 16px; }
.news-a { letter-spacing: -0.150px; }
.news-b { color: #c8c8c8; letter-spacing: -0.200px; }
.badge-text { font: 12px "Open Sans", sans-serif; fill: #111; }
.apps { display: flex; align-items: center; height: 46px; }
.app { position: relative; width: 44px; height: 46px; display: flex; align-items: center; justify-content: center; }
.app-open::before { content: ""; position: absolute; inset: 3px 2px; border: 1px solid #333; border-radius: 4px; background: #2a2a2a; }
.app-open svg { position: relative; }
.app-open svg, .xbox svg { margin-top: -4px; }
.app-open::after, .running::after { content: ""; position: absolute; bottom: 4px; width: 6px; height: 3px; border-radius: 2px; background: #9a9a9a; }
.app-open::after { width: 16px; background: #4cc2ff; }
.app-letter { font: 700 10.500px "Open Sans", sans-serif; fill: #fff; text-anchor: middle; }
.s-badge { font: 10px Roboto, sans-serif; fill: #fff; text-anchor: middle; }
.search { width: 220px; height: 32px; margin: 0 2px 0 3px; border-radius: 16px; background: #3a3a3a; border: 1px solid #484848; display: flex; align-items: center; padding: 0 4px 0 11px; }
.search-label { font-size: 14px; letter-spacing: -0.300px; color: #ccc; margin-left: 9px; flex: 1; }
.tray { margin-left: auto; display: flex; align-items: center; padding-right: 18px; }
.eng { font-size: 12px; margin-left: 21px; letter-spacing: -0.400px; width: 24px; }
.wifi { margin-left: 18px; }
.sound { margin-left: 8px; }
.battery { margin-left: 7px; }
.clock { display: flex; flex-direction: column; text-align: right; width: 64px; font-size: 12px; line-height: 16px; letter-spacing: -0.150px; }
```
FILE: chart.js
```js
const NS = 'http://www.w3.org/2000/svg';
const labels = document.getElementById('xlabels');
const bands = document.getElementById('bands');

// Tick runs: first x, tick count, first counter value, increment.
const runs = [
  [1076, 42, 23, 5.1],
  [1244, 41, 5, 5.2],
  [1406, 14, 55, 12.3],
  [1461, 7, 10, 6.4]
];
for (const [x0, count, first, step] of runs) {
  for (let i = 0; i < count; i++) {
    const t = document.createElementNS(NS, 'text');
    t.setAttribute('transform', `translate(${x0 + i * 3.95 + 6} 824.5) rotate(-45)`);
    t.textContent = Math.round(first + i * step);
    labels.appendChild(t);
  }
}
for (let x = 1076; x < 1488; x += 11.8) {
  const r = document.createElementNS(NS, 'rect');
  r.setAttribute('x', x + 4);
  r.setAttribute('y', 529);
  r.setAttribute('width', 4);
  r.setAttribute('height', 284.5);
  r.setAttribute('fill', '#dbdcf3');
  bands.appendChild(r);
}
```
